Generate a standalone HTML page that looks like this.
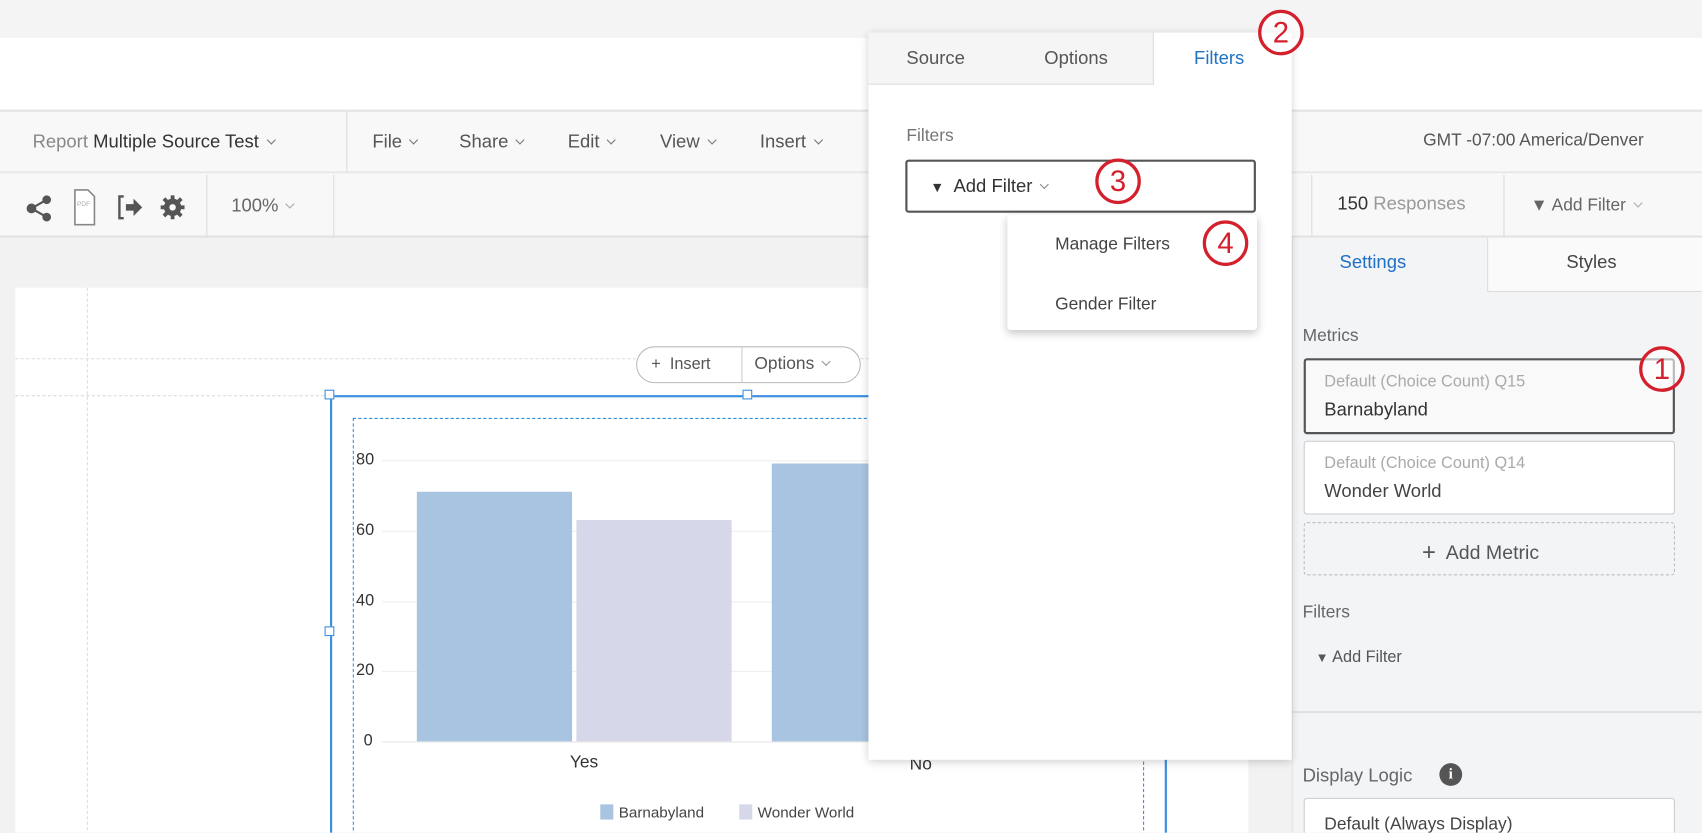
<!DOCTYPE html>
<html><head><meta charset="utf-8"><style>
*{box-sizing:border-box;margin:0;padding:0}
html,body{width:1702px;height:832px;overflow:hidden;background:#f2f2f2}
#w{position:absolute;left:0;top:0;width:1568px;height:767px;transform:scale(1.0855);transform-origin:0 0;font-family:"Liberation Sans",sans-serif;color:#444;background:#f2f2f2;overflow:hidden}
.a{position:absolute}
.t{position:absolute;white-space:nowrap}
.chev{display:inline-block;width:6px;height:6px;border-right:1.3px solid #777;border-bottom:1.3px solid #777;transform:rotate(45deg);margin-left:8px;position:relative;top:-4px}
.circ{position:absolute;width:42px;height:42px;border:3px solid #d41f2d;border-radius:50%;color:#d41f2d;font-size:27px;text-align:center;line-height:36px;background:rgba(255,255,255,.6)}
</style></head><body><div id="w">
<div class="a" style="left:0;top:0;width:1568px;height:35px;background:#f4f4f4"></div>
<div class="a" style="left:0;top:35px;width:1568px;height:66px;background:#fff"></div>
<!-- toolbar 1 -->
<div class="a" style="left:0;top:101px;width:1568px;height:58px;background:#f8f8f8;border-top:2px solid #e4e4e4;border-bottom:1px solid #e0e0e0"></div>
<div class="t" style="left:30px;top:121px;font-size:17px;color:#888">Report <span style="color:#333">Multiple Source Test</span><span class="chev"></span></div>
<div class="a" style="left:319px;top:103px;width:1px;height:56px;background:#ddd"></div>
<div class="t" style="left:343px;top:121px;font-size:17px;color:#555">File<span class="chev"></span></div>
<div class="t" style="left:423px;top:121px;font-size:17px;color:#555">Share<span class="chev"></span></div>
<div class="t" style="left:523px;top:121px;font-size:17px;color:#555">Edit<span class="chev"></span></div>
<div class="t" style="left:608px;top:121px;font-size:17px;color:#555">View<span class="chev"></span></div>
<div class="t" style="left:700px;top:121px;font-size:17px;color:#555">Insert<span class="chev"></span></div>
<div class="t" style="left:1311px;top:121px;font-size:16px;color:#555">GMT -07:00 America/Denver</div>
<!-- toolbar 2 -->
<div class="a" style="left:0;top:160px;width:1568px;height:59px;background:#f8f8f8;border-bottom:2px solid #e2e2e2"></div>
<svg class="a" style="left:24px;top:178px" width="24" height="28" viewBox="0 0 24 28"><g fill="#555" stroke="#555" stroke-width="2"><line x1="5" y1="14" x2="19" y2="6"/><line x1="5" y1="14" x2="19" y2="22"/><circle cx="5" cy="14" r="3.5"/><circle cx="19" cy="6" r="3"/><circle cx="19" cy="22" r="3"/></g></svg>
<svg class="a" style="left:67px;top:174px" width="22" height="34" viewBox="0 0 22 34"><path d="M2 1h12l6 6v26H2z" fill="#fff" stroke="#888" stroke-width="1.5"/><text x="4" y="16" font-size="6" fill="#aaa" font-family="Liberation Sans">PDF</text></svg>
<svg class="a" style="left:107px;top:178px" width="26" height="26" viewBox="0 0 26 26"><path d="M7 3H3v20h4" fill="none" stroke="#555" stroke-width="2.2"/><path d="M9 10h7V5l8 8-8 8v-5H9z" fill="#555"/></svg>
<svg class="a" style="left:147px;top:179px" width="24" height="24" viewBox="0 0 24 24"><circle cx="12" cy="12" r="6" fill="none" stroke="#555" stroke-width="4"/><g stroke="#555" stroke-width="3.5"><line x1="12" y1="1" x2="12" y2="23"/><line x1="1" y1="12" x2="23" y2="12"/><line x1="4" y1="4" x2="20" y2="20"/><line x1="20" y1="4" x2="4" y2="20"/></g><circle cx="12" cy="12" r="3" fill="#f8f8f8"/></svg>
<div class="a" style="left:190px;top:161px;width:1px;height:57px;background:#ddd"></div>
<div class="t" style="left:213px;top:180px;font-size:17px;color:#666">100%<span class="chev" style="border-color:#aaa"></span></div>
<div class="a" style="left:307px;top:161px;width:1px;height:57px;background:#ddd"></div>
<div class="a" style="left:1208px;top:161px;width:1px;height:57px;background:#ddd"></div>
<div class="t" style="left:1232px;top:178px;font-size:17px;color:#999"><span style="color:#333">150</span> Responses</div>
<div class="a" style="left:1385px;top:161px;width:1px;height:57px;background:#ddd"></div>
<div class="t" style="left:1410px;top:181px;font-size:16px;color:#666">▼ Add Filter<span class="chev" style="border-color:#aaa"></span></div>
<!-- canvas -->
<div class="a" style="left:14px;top:265px;width:1136px;height:510px;background:#fff"></div>
<div class="a" style="left:80px;top:265px;width:0;height:510px;border-left:1px dashed #ddd"></div>
<div class="a" style="left:14px;top:330px;width:1136px;border-top:1px dashed #ddd"></div>
<div class="a" style="left:14px;top:364px;width:290px;border-top:1px dashed #ddd"></div>
<div class="a" style="left:586px;top:319px;width:207px;height:34px;border:1px solid #bbb;border-radius:17px;background:#fff"></div>
<div class="a" style="left:683px;top:320px;width:1px;height:32px;background:#ccc"></div>
<div class="t" style="left:600px;top:327px;font-size:15px;color:#555">+ &nbsp;Insert</div>
<div class="t" style="left:695px;top:327px;font-size:16px;color:#555">Options<span class="chev" style="border-color:#999"></span></div>
<div class="a" style="left:304px;top:364px;width:771px;height:410px;border:2px solid #3a8ee0;border-bottom:none"></div>
<div class="a" style="left:299px;top:359px;width:9px;height:9px;border:1.5px solid #3a8ee0;background:#fff"></div>
<div class="a" style="left:684px;top:359px;width:9px;height:9px;border:1.5px solid #3a8ee0;background:#fff"></div>
<div class="a" style="left:299px;top:577px;width:9px;height:9px;border:1.5px solid #3a8ee0;background:#fff"></div>
<div class="a" style="left:325px;top:385px;width:729px;height:390px;border:1.5px dashed #3a8ee0;border-bottom:none"></div>
<div class="a" style="left:352px;top:424px;width:700px;height:1px;background:#eee"></div>
<div class="a" style="left:352px;top:489px;width:700px;height:1px;background:#eee"></div>
<div class="a" style="left:352px;top:554px;width:700px;height:1px;background:#eee"></div>
<div class="a" style="left:352px;top:618px;width:700px;height:1px;background:#eee"></div>
<div class="a" style="left:352px;top:683px;width:700px;height:1px;background:#e6e6e6"></div>
<div class="t" style="left:328px;top:415px;font-size:15px;color:#333">80</div>
<div class="t" style="left:328px;top:480px;font-size:15px;color:#333">60</div>
<div class="t" style="left:328px;top:545px;font-size:15px;color:#333">40</div>
<div class="t" style="left:328px;top:609px;font-size:15px;color:#333">20</div>
<div class="t" style="left:335px;top:674px;font-size:15px;color:#333">0</div>
<div class="a" style="left:384px;top:453px;width:143px;height:230px;background:#a9c4e0"></div>
<div class="a" style="left:531px;top:479px;width:143px;height:204px;background:#d6d8ea"></div>
<div class="a" style="left:711px;top:427px;width:143px;height:256px;background:#a9c4e0"></div>
<div class="t" style="left:525px;top:694px;font-size:16px;color:#333">Yes</div>
<div class="t" style="left:838px;top:696px;font-size:16px;color:#333">No</div>
<div class="a" style="left:553px;top:741px;width:12px;height:14px;background:#a9c4e0"></div>
<div class="t" style="left:570px;top:740px;font-size:14px;color:#444">Barnabyland</div>
<div class="a" style="left:681px;top:741px;width:12px;height:14px;background:#d6d8ea"></div>
<div class="t" style="left:698px;top:740px;font-size:14px;color:#444">Wonder World</div>
<!-- right panel -->
<div class="a" style="left:1190px;top:219px;width:378px;height:548px;background:#f3f4f6;border-left:1px solid #e4e4e4"></div>
<div class="a" style="left:1370px;top:219px;width:198px;height:50px;background:#fafafa;border-left:1px solid #ddd;border-bottom:1px solid #ddd"></div>
<div class="t" style="left:1234px;top:232px;font-size:17px;color:#1f6fc5">Settings</div>
<div class="t" style="left:1443px;top:232px;font-size:17px;color:#444">Styles</div>
<div class="t" style="left:1200px;top:301px;font-size:16px;color:#666">Metrics</div>
<div class="a" style="left:1201px;top:330px;width:342px;height:70px;background:#f9f9f9;border:2px solid #555;border-radius:3px"></div>
<div class="t" style="left:1220px;top:343px;font-size:15px;color:#aaa">Default (Choice Count) Q15</div>
<div class="t" style="left:1220px;top:368px;font-size:17px;color:#333">Barnabyland</div>
<div class="a" style="left:1201px;top:406px;width:342px;height:68px;background:#fff;border:1px solid #ccc;border-radius:3px"></div>
<div class="t" style="left:1220px;top:418px;font-size:15px;color:#aaa">Default (Choice Count) Q14</div>
<div class="t" style="left:1220px;top:443px;font-size:17px;color:#444">Wonder World</div>
<div class="a" style="left:1201px;top:481px;width:342px;height:49px;border:1px dashed #bbb;border-radius:3px"></div>
<div class="t" style="left:1310px;top:495px;font-size:18px;color:#555"><span style="font-size:22px;position:relative;top:1px">+</span>&nbsp; Add Metric</div>
<div class="t" style="left:1200px;top:556px;font-size:16px;color:#666">Filters</div>
<div class="t" style="left:1212px;top:597px;font-size:15px;color:#555"><span style="font-size:12px">▼</span> Add Filter</div>
<div class="a" style="left:1190px;top:655px;width:378px;height:2px;background:#e2e2e2"></div>
<div class="t" style="left:1200px;top:705px;font-size:17px;color:#666">Display Logic</div>
<div class="a" style="left:1326px;top:703px;width:21px;height:21px;border-radius:50%;background:#555;color:#fff;font-size:14px;font-weight:bold;text-align:center;line-height:21px;font-family:'Liberation Serif',serif">i</div>
<div class="a" style="left:1201px;top:735px;width:342px;height:40px;background:#fff;border:1px solid #ccc;border-radius:3px"></div>
<div class="t" style="left:1220px;top:751px;font-size:16px;color:#444">Default (Always Display)</div>
<!-- popup -->
<div class="a" style="left:800px;top:30px;width:390px;height:670px;background:#fff;box-shadow:0 2px 8px rgba(0,0,0,.2)"></div>
<div class="a" style="left:800px;top:30px;width:263px;height:48px;background:#f5f5f5;border-bottom:1px solid #ddd;border-right:1px solid #ddd"></div>
<div class="t" style="left:835px;top:44px;font-size:17px;color:#555">Source</div>
<div class="t" style="left:962px;top:44px;font-size:17px;color:#555">Options</div>
<div class="t" style="left:1100px;top:44px;font-size:17px;color:#1f72c6">Filters</div>
<div class="t" style="left:835px;top:117px;font-size:16px;color:#777">Filters</div>
<div class="a" style="left:834px;top:147px;width:323px;height:49px;border:2px solid #555;border-radius:3px"></div>
<div class="t" style="left:857px;top:162px;font-size:17px;color:#333"><span style="font-size:13px">▼</span>&nbsp; Add Filter<span class="chev" style="border-color:#888"></span></div>
<div class="a" style="left:928px;top:198px;width:230px;height:106px;background:#fff;box-shadow:0 3px 8px rgba(0,0,0,.22);border-radius:3px"></div>
<div class="t" style="left:972px;top:217px;font-size:16px;color:#444">Manage Filters</div>
<div class="t" style="left:972px;top:272px;font-size:16px;color:#444">Gender Filter</div>
<!-- red circles -->
<div class="circ" style="left:1159px;top:9px">2</div>
<div class="circ" style="left:1009px;top:146px">3</div>
<div class="circ" style="left:1108px;top:203px">4</div>
<div class="circ" style="left:1510px;top:319px">1</div>
</div></body></html>
